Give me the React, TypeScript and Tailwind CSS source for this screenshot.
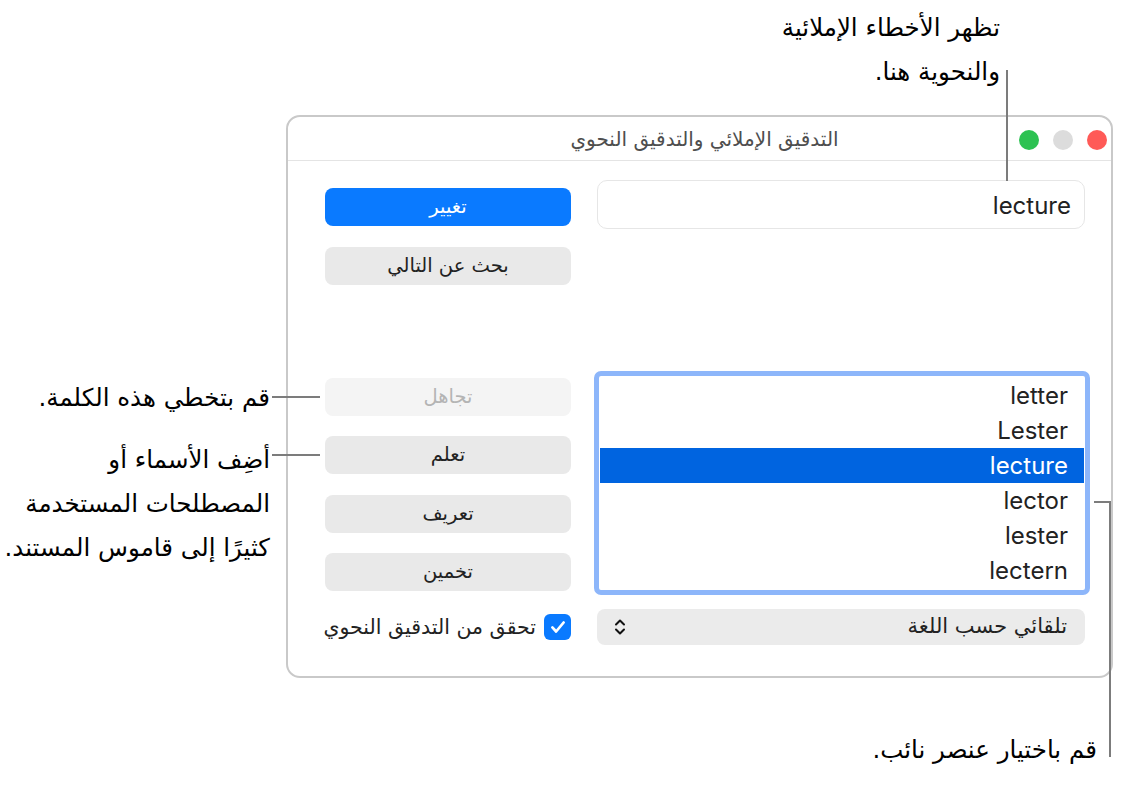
import React from 'react';

const AR = "font-['DejaVu_Sans',sans-serif]";
const LAT = "font-['Inter','Liberation_Sans',sans-serif]";

function Btn({ label, kind }: { label: string; kind: 'blue' | 'grey' | 'disabled' }) {
  const cls =
    kind === 'blue'
      ? 'bg-[#0a7aff] text-white'
      : kind === 'disabled'
      ? 'bg-[#f4f4f4] text-[#b4b4b4]'
      : 'bg-[#e9e9e9] text-[#222]';
  return (
    <div dir="rtl" className={`h-[38px] w-[246px] rounded-[8px] flex items-center justify-center text-[19.5px] ${AR} ${cls}`}>
      {label}
    </div>
  );
}

export default function App() {
  const items = ['letter', 'Lester', 'lecture', 'lector', 'lester', 'lectern'];
  return (
    <div className="relative w-[1128px] h-[793px] bg-white overflow-hidden pt-[115px] pl-[286px]">
      {/* Window */}
      <div className="w-[827px] h-[563px] border-2 border-[#c9c9c9] rounded-[14px] bg-white flex flex-col">
        <div className="h-[44px] border-b border-[#e4e4e4] grid grid-cols-[1fr_auto_1fr] items-center">
          <div />
          <div dir="rtl" className={`text-[20px] text-[#4e4e4e] pl-[10px] ${AR}`}>التدقيق الإملائي والتدقيق النحوي</div>
          <div className="flex justify-end items-center gap-[14px] pr-[4px] pt-[2px]">
            <div className="w-[20px] h-[20px] rounded-full bg-[#2dc252]" />
            <div className="w-[20px] h-[20px] rounded-full bg-[#dcdcdc]" />
            <div className="w-[20px] h-[20px] rounded-full bg-[#ff5a57]" />
          </div>
        </div>
        <div className="flex flex-row pl-[37px] gap-[26px]">
          {/* left column */}
          <div className="w-[246px] flex flex-col pt-[27px]">
            <Btn label="تغيير" kind="blue" />
            <div className="mt-[21px]"><Btn label="بحث عن التالي" kind="grey" /></div>
            <div className="mt-[93px]"><Btn label="تجاهل" kind="disabled" /></div>
            <div className="mt-[20px]"><Btn label="تعلم" kind="grey" /></div>
            <div className="mt-[21px]"><Btn label="تعريف" kind="grey" /></div>
            <div className="mt-[20px]"><Btn label="تخمين" kind="grey" /></div>
            <div className="mt-[23px] h-[26px] flex items-center justify-end gap-[8px]">
              <span dir="rtl" className={`text-[20.5px] text-[#222] whitespace-nowrap ${AR}`}>تحقق من التدقيق النحوي</span>
              <div className="w-[27px] h-[26px] shrink-0 rounded-[6px] bg-[#0a7aff] flex items-center justify-center">
                <svg width="18" height="18" viewBox="0 0 24 24" fill="none" stroke="white" strokeWidth="3.6" strokeLinecap="round" strokeLinejoin="round">
                  <path d="M4.5 12.5l5 5.5L19.5 6" />
                </svg>
              </div>
            </div>
          </div>
          {/* right column */}
          <div className="w-[488px] flex flex-col pt-[19px]">
            <div className="h-[49px] border border-[#e6e6e6] rounded-[10px] flex items-center justify-end pr-[13px] pt-[3px]">
              <span className={`text-[24px] text-[#222] ${LAT}`}>lecture</span>
            </div>
            <div className="mt-[142px] -ml-[3px] w-[496px] h-[224px] border-[5px] border-[#8db6fa] rounded-[7px] bg-white pt-[2px] px-[1px]">
              {items.map((t) => (
                <div
                  key={t}
                  className={`h-[35px] flex items-center justify-end pr-[16px] text-[24px] ${LAT} ${
                    t === 'lecture' ? 'bg-[#0064e0] text-white' : 'text-[#222]'
                  }`}
                >
                  {t}
                </div>
              ))}
            </div>
            <div className="mt-[14px] h-[36px] bg-[#ebebeb] rounded-[8px] flex items-center justify-between pl-[17px] pr-[18px]">
              <svg width="12" height="20" viewBox="0 0 12 20" fill="none" stroke="#111" strokeWidth="2" strokeLinecap="round" strokeLinejoin="round">
                <path d="M2 7.5L6 3.5L10 7.5" />
                <path d="M2 12.5L6 16.5L10 12.5" />
              </svg>
              <span dir="rtl" className={`text-[21px] text-[#222] ${AR}`}>تلقائي حسب اللغة</span>
            </div>
          </div>
        </div>
      </div>

      {/* Callouts */}
      <div dir="rtl" className={`absolute right-[128px] top-[6px] text-[24.5px] leading-[44px] text-black text-right whitespace-nowrap ${AR}`}>
        <div>تظهر الأخطاء الإملائية</div>
        <div>والنحوية هنا.</div>
      </div>
      <div className="absolute left-[1006px] top-[70px] w-[2px] h-[111px] bg-[#7c7c7c]" />

      <div dir="rtl" className={`absolute right-[858px] top-[376px] text-[24.5px] leading-[44px] text-black text-right whitespace-nowrap ${AR}`}>
        قم بتخطي هذه الكلمة.
      </div>
      <div className="absolute left-[272px] top-[396px] w-[48px] h-[2px] bg-[#7c7c7c]" />

      <div dir="rtl" className={`absolute right-[858px] top-[438px] text-[24.5px] leading-[44px] text-black text-right whitespace-nowrap ${AR}`}>
        <div>أضِف الأسماء أو</div>
        <div>المصطلحات المستخدمة</div>
        <div>كثيرًا إلى قاموس المستند.</div>
      </div>
      <div className="absolute left-[272px] top-[454px] w-[48px] h-[2px] bg-[#7c7c7c]" />

      <div className="absolute left-[1094px] top-[501px] w-[17px] h-[2px] bg-[#7c7c7c]" />
      <div className="absolute left-[1109px] top-[501px] w-[2px] h-[256px] bg-[#7c7c7c]" />
      <div dir="rtl" className={`absolute right-[31px] top-[728px] text-[24.5px] leading-[44px] text-black text-right whitespace-nowrap ${AR}`}>
        قم باختيار عنصر نائب.
      </div>
    </div>
  );
}
